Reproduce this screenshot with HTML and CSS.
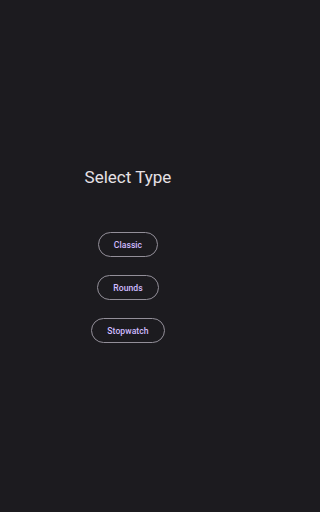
FILE: index.html
```html
<!DOCTYPE html>
<html>
<head>
<meta charset="utf-8">
<link rel="stylesheet" href="styles.css">
</head>
<body>
<main class="screen">
  <h1 class="title">Select Type</h1>
  <div class="buttons">
    <button class="btn">Classic</button>
    <button class="btn">Rounds</button>
    <button class="btn">Stopwatch</button>
  </div>
</main>
</body>
</html>
```

FILE: styles.css
```css
html, body {
  margin: 0;
  padding: 0;
  background: #1c1b1f;
}
.screen {
  width: 256px;
  height: 512px;
  display: flex;
  flex-direction: column;
  align-items: center;
  font-family: Roboto, "Noto Sans", sans-serif;
}
.title {
  margin: 165px 0 0 0;
  font-size: 17px;
  font-weight: 400;
  line-height: 25px;
  color: #e6e1e5;
}
.buttons {
  margin-top: 42px;
  display: flex;
  flex-direction: column;
  align-items: center;
  gap: 18px;
}
.btn {
  height: 25px;
  padding: 0 15px;
  border: 1px solid #938f99;
  border-radius: 13px;
  background: transparent;
  color: #d0bcff;
  font-family: Roboto, "Noto Sans", sans-serif;
  font-size: 8.6px;
  font-weight: 500;
  letter-spacing: 0.05px;
}
```
